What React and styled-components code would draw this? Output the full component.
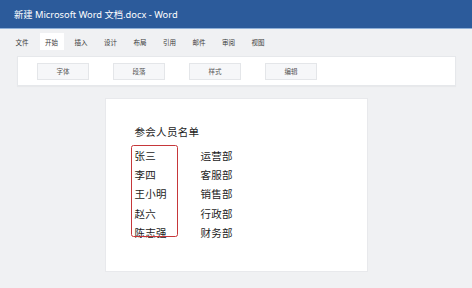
import React from "react";
import styled, { createGlobalStyle } from "styled-components";

const Global = createGlobalStyle`
  html, body { margin: 0; padding: 0; }
  body {
    background: #f0f1f3;
    font-family: "Noto Sans", "Noto Sans CJK SC", sans-serif;
    color: #333;
    width: 472px;
    height: 288px;
    overflow: hidden;
  }
`;

const Window = styled.div`
  display: flex;
  flex-direction: column;
  width: 472px;
  height: 288px;
`;

const TitleBar = styled.div`
  height: 28px;
  background: #2c5b9b;
  border-bottom: 1px solid #8fb0d8;
  display: flex;
  align-items: center;
  padding-left: 14px;
  color: #fff;
  font-size: 9.3px;
  font-family: "Noto Sans", "Noto Sans CJK SC", sans-serif;
`;

const Menu = styled.div`
  display: flex;
  align-items: center;
  height: 17px;
  margin-top: 4px;
  padding-left: 10px;
  gap: 5.5px;
`;

const Tab = styled.div`
  width: 24px;
  height: 17px;
  display: flex;
  align-items: center;
  justify-content: center;
  font-size: 6.5px;
  color: #3a3a3a;
  background: ${(p) => (p.$active ? "#fff" : "transparent")};
`;

const Ribbon = styled.div`
  margin: 6px 16px 0 17px;
  height: 30px;
  background: #fff;
  border: 1px solid #e6e8eb;
  box-sizing: border-box;
  box-shadow: 0 1px 1px rgba(0, 0, 0, 0.03);
  display: flex;
  align-items: center;
  padding-left: 19px;
  gap: 24px;
`;

const GroupButton = styled.div`
  width: 52px;
  height: 17px;
  box-sizing: border-box;
  border: 1px solid #e4e6e9;
  background: #f6f7f9;
  display: flex;
  align-items: center;
  justify-content: center;
  font-size: 6.5px;
  color: #555;
`;

const Workspace = styled.div`
  flex: 1;
  display: flex;
  justify-content: center;
  padding-top: 12px;
`;

const Page = styled.div`
  width: 263px;
  height: 174px;
  box-sizing: border-box;
  background: #fff;
  border: 1px solid #e8e9ec;
  padding: 25.5px 0 0 29px;
  font-family: "Noto Sans CJK SC", sans-serif;
`;

const DocTitle = styled.div`
  font-size: 10.5px;
  line-height: 14px;
  color: #1c1c1c;
  letter-spacing: 0.3px;
`;

const List = styled.div`
  position: relative;
  margin-top: 7.5px;
  display: grid;
  grid-template-columns: 66px auto;
  grid-auto-rows: 19.2px;
  align-items: center;
  font-size: 10.5px;
  color: #1c1c1c;
`;

const Cell = styled.div`
  line-height: 19.2px;
  letter-spacing: 0.2px;
`;

const Highlight = styled.div`
  position: absolute;
  left: -4px;
  top: -1px;
  width: 47px;
  height: 92px;
  box-sizing: border-box;
  border: 1.6px solid #c6373a;
  border-radius: 2.5px;
  pointer-events: none;
`;

const tabs = ["文件", "开始", "插入", "设计", "布局", "引用", "邮件", "审阅", "视图"];
const groups = ["字体", "段落", "样式", "编辑"];
const people = [
  ["张三", "运营部"],
  ["李四", "客服部"],
  ["王小明", "销售部"],
  ["赵六", "行政部"],
  ["陈志强", "财务部"],
];

export default function App() {
  return (
    <>
      <Global />
      <Window>
        <TitleBar>新建 Microsoft Word 文档.docx - Word</TitleBar>
        <Menu>
          {tabs.map((t) => (
            <Tab key={t} $active={t === "开始"}>
              {t}
            </Tab>
          ))}
        </Menu>
        <Ribbon>
          {groups.map((g) => (
            <GroupButton key={g}>{g}</GroupButton>
          ))}
        </Ribbon>
        <Workspace>
          <Page>
            <DocTitle>参会人员名单</DocTitle>
            <List>
              {people.map(([n, d]) => (
                <React.Fragment key={n}>
                  <Cell>{n}</Cell>
                  <Cell>{d}</Cell>
                </React.Fragment>
              ))}
              <Highlight />
            </List>
          </Page>
        </Workspace>
      </Window>
    </>
  );
}
